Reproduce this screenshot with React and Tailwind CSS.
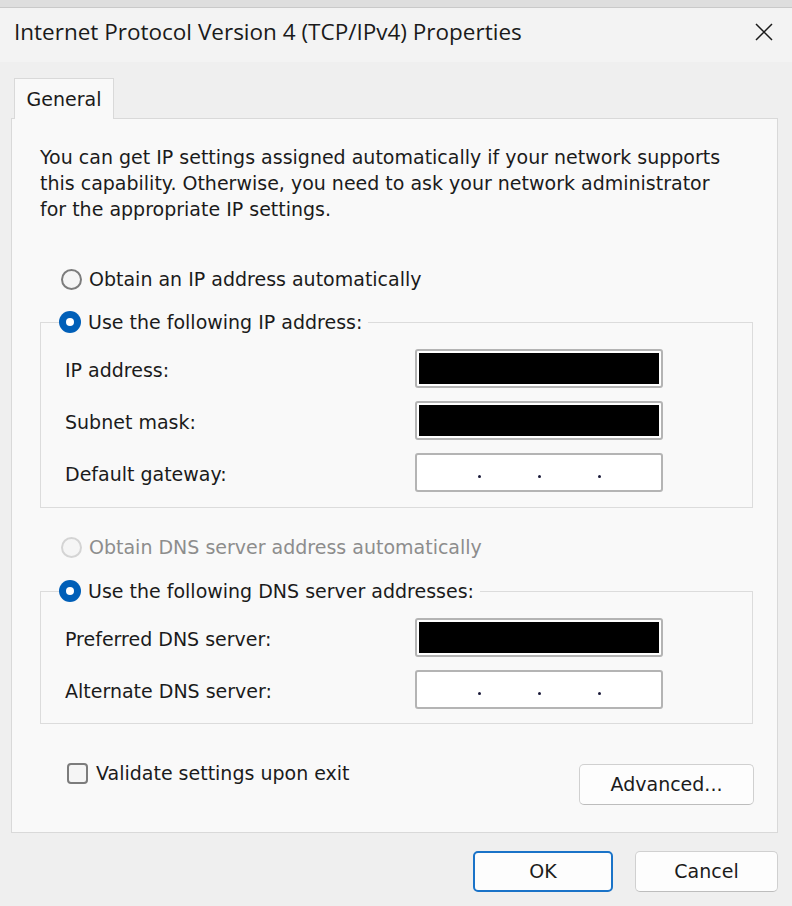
import React from "react";

const body = { fontFamily: '"DejaVu Sans", Verdana, sans-serif' };

const Radio = ({ checked, disabled }) =>
  checked ? (
    <span className="w-[22px] h-[22px] rounded-full bg-[#005fb8] flex items-center justify-center shrink-0">
      <span className="w-[8px] h-[8px] rounded-full bg-white" />
    </span>
  ) : (
    <span
      className={
        "w-[21px] h-[21px] rounded-full border-2 bg-[#f5f5f5] shrink-0 " +
        (disabled ? "border-[#d4d4d4]" : "border-[#7c7c7c]")
      }
    />
  );

const Field = ({ label, filled }) => (
  <div className="grid grid-cols-[350px_248px] items-center">
    <span className="pt-[3px]">{label}</span>
    <div className="h-[39px] rounded-[3px] border-2 border-[#b4b4b4] bg-white p-[2px]">
      {filled ? (
        <div className="w-full h-full bg-black" />
      ) : (
        <div className="h-full flex items-end pb-[10px] pl-[59px] gap-[57px]">
          <span className="w-[3px] h-[3px] rounded-full bg-[#1a1a3a]" />
          <span className="w-[3px] h-[3px] rounded-full bg-[#1a1a3a]" />
          <span className="w-[3px] h-[3px] rounded-full bg-[#1a1a3a]" />
        </div>
      )}
    </div>
  </div>
);

const Group = ({ legend, children }) => (
  <fieldset className="border border-[#dcdcdc] w-[713px]">
    <legend className="ml-[18px] pr-[6px] flex items-center gap-[7px] h-[26px]">
      <Radio checked />
      <span>{legend}</span>
    </legend>
    {children}
  </fieldset>
);

export default function App() {
  return (
    <div className="w-[792px] h-[906px] bg-[#efefef] flex flex-col text-[#1b1b1b] text-[19px]" style={body}>
      {/* window behind */}
      <div className="h-[8px] bg-[#dedede] border-b border-[#c9c9c9]" />

      {/* title bar */}
      <div className="h-[54px] bg-[#f3f3f3] flex items-center justify-between pl-[14px] pr-[19px] pb-[6px]">
        <span className="text-[22.5px] text-[#1a1a1a]" style={{ fontFamily: '"Open Sans", "Liberation Sans", sans-serif' }}>
          Internet Protocol Version 4 (TCP/IPv4) Properties
        </span>
        <svg width="18" height="18" viewBox="0 0 18 18" fill="none" stroke="#1a1a1a" strokeWidth="1.5">
          <path d="M1 1 L17 17 M17 1 L1 17" />
        </svg>
      </div>

      {/* tabs */}
      <div className="pl-[11px] pt-[16px]">
        <div className="ml-[3px] w-[100px] h-[41px] bg-[#f9f9f9] border border-b-0 border-[#d9d9d9] relative z-10 -mb-px flex items-center justify-center">
          General
        </div>
        <div className="w-[767px] h-[715px] bg-[#f9f9f9] border border-[#d9d9d9] pl-[28px] pt-[25px]">
          <p className="leading-[26px] whitespace-nowrap">
            You can get IP settings assigned automatically if your network supports
            <br />
            this capability. Otherwise, you need to ask your network administrator
            <br />
            for the appropriate IP settings.
          </p>

          <div className="mt-[44px] ml-[21px] flex items-center gap-[7px] h-[26px]">
            <Radio />
            <span>Obtain an IP address automatically</span>
          </div>

          <div className="mt-[17px]">
            <Group legend="Use the following IP address:">
              <div className="pl-[24px] pt-[14px] pb-[15px] flex flex-col gap-[13px]">
                <Field label="IP address:" filled />
                <Field label="Subnet mask:" filled />
                <Field label="Default gateway:" />
              </div>
            </Group>
          </div>

          <div className="mt-[26px] ml-[21px] flex items-center gap-[7px] h-[26px] text-[#8d8d8d]">
            <Radio disabled />
            <span>Obtain DNS server address automatically</span>
          </div>

          <div className="mt-[18px]">
            <Group legend="Use the following DNS server addresses:">
              <div className="pl-[24px] pt-[14px] pb-[14px] flex flex-col gap-[13px]">
                <Field label="Preferred DNS server:" filled />
                <Field label="Alternate DNS server:" />
              </div>
            </Group>
          </div>

          <div className="mt-[36px] flex items-start justify-between w-[714px]">
            <div className="ml-[27px] flex items-center gap-[8px] h-[26px]">
              <span className="w-[21px] h-[21px] rounded-[4px] border-2 border-[#7c7c7c] bg-[#f5f5f5]" />
              <span>Validate settings upon exit</span>
            </div>
            <button className="mt-[4px] w-[175px] h-[41px] rounded-[5px] border border-[#d0d0d0] border-b-[#bdbdbd] bg-[#fdfdfd]">
              Advanced...
            </button>
          </div>
        </div>
      </div>

      {/* footer buttons */}
      <div className="flex justify-end gap-[22px] pr-[14px] pt-[18px]">
        <button className="w-[140px] h-[41px] rounded-[5px] border-2 border-[#1a73c8] bg-[#fdfdfd]">OK</button>
        <button className="w-[143px] h-[41px] rounded-[5px] border border-[#d0d0d0] border-b-[#bdbdbd] bg-[#fdfdfd]">Cancel</button>
      </div>
    </div>
  );
}
